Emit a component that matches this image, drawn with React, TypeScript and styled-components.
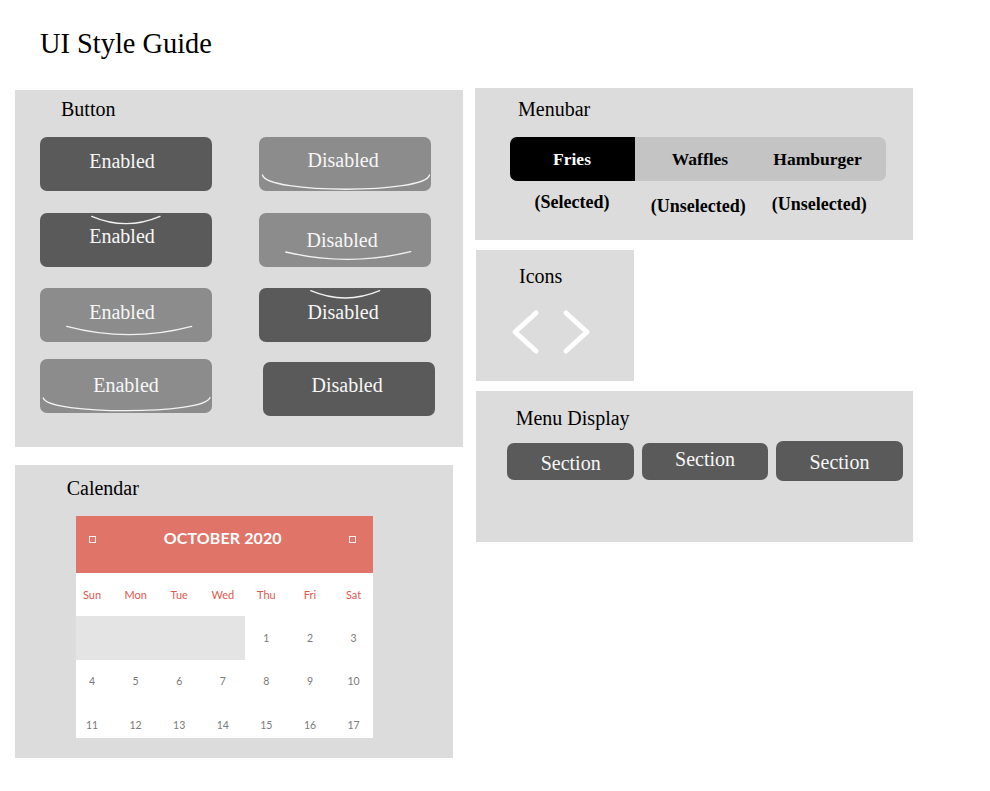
import React from "react";
import styled, { createGlobalStyle } from "styled-components";

const Global = createGlobalStyle`
  html, body { margin: 0; padding: 0; background: #ffffff; }
  body { font-family: "Liberation Serif", "Times New Roman", serif; color: #000; }
`;

const Page = styled.div`
  width: 990px;
  min-height: 791px;
`;

const Title = styled.h1`
  margin: 0;
  padding: 27.5px 0 0 40px;
  font-size: 28.4px;
  line-height: 32px;
  font-weight: 400;
`;

const Columns = styled.div`
  display: flex;
  align-items: flex-start;
  margin-top: 30.5px;
  padding-left: 15px;
`;

const LeftCol = styled.div`
  display: flex;
  flex-direction: column;
  align-items: flex-start;
  gap: 18px;
`;

const RightCol = styled.div`
  display: flex;
  flex-direction: column;
  align-items: flex-start;
  gap: 10px;
  margin-left: 12px;
  margin-top: -2px;
`;

const Panel = styled.section<{ $w: number; $h: number; $pt: number; $dx?: number }>`
  box-sizing: border-box;
  width: ${(p) => p.$w}px;
  height: ${(p) => p.$h}px;
  padding-top: ${(p) => p.$pt}px;
  margin-left: ${(p) => p.$dx ?? 0}px;
  background: #dcdcdc;
  display: flex;
  flex-direction: column;
  align-items: flex-start;
`;

const Label = styled.h2<{ $x: number }>`
  margin: 0;
  padding-left: ${(p) => p.$x}px;
  font-size: 20px;
  line-height: 23px;
  font-weight: 400;
`;

/* ---------- Buttons ---------- */

const ButtonGrid = styled.div`
  display: grid;
  grid-template-columns: 172px 172px;
  column-gap: 46.5px;
  row-gap: 21.7px;
  margin: 16.5px 0 0 25px;
`;

const Btn = styled.div<{ $tone: "dark" | "light"; $mx?: number; $my?: number }>`
  position: relative;
  box-sizing: border-box;
  width: 172px;
  height: 54px;
  margin-left: ${(p) => p.$mx ?? 0}px;
  margin-top: ${(p) => p.$my ?? 0}px;
  border-radius: 7px;
  background: ${(p) => (p.$tone === "dark" ? "#5a5a5a" : "#8c8c8c")};
  color: #f7f7f7;
  display: flex;
  align-items: center;
  justify-content: center;
  font-size: 20px;
  line-height: 23px;
`;

const BtnText = styled.span<{ $dx: number; $lift: number }>`
  margin-left: ${(p) => Math.max(0, p.$dx * 2)}px;
  margin-right: ${(p) => Math.max(0, -p.$dx * 2)}px;
  margin-bottom: ${(p) => Math.max(0, p.$lift * 2)}px;
  margin-top: ${(p) => Math.max(0, -p.$lift * 2)}px;
`;

const Arc = styled.svg`
  position: absolute;
  left: 0;
  top: 0;
  width: 172px;
  height: 54px;
  overflow: visible;
  pointer-events: none;
`;

type BtnSpec = {
  text: string;
  tone: "dark" | "light";
  arc?: string;
  dx: number;
  lift: number;
  mx?: number;
  my?: number;
};

const buttons: BtnSpec[] = [
  { text: "Enabled", tone: "dark", dx: -4, lift: 2.3 },
  { text: "Disabled", tone: "light", dx: -1.4, lift: 3.4, arc: "M3.5 38 C 8 57, 166 57, 170.5 38" },
  { text: "Enabled", tone: "dark", dx: -4, lift: 2.7, arc: "M51.7 3.3 Q86 17.9 120 3.3" },
  { text: "Disabled", tone: "light", dx: -2.4, lift: -0.9, arc: "M26.7 39 Q89 53.8 151.7 38.7" },
  { text: "Enabled", tone: "light", dx: -4, lift: 2.9, arc: "M26.7 38.4 Q89 55 151.7 38.4" },
  { text: "Disabled", tone: "dark", dx: -1.4, lift: 3.2, arc: "M51.7 2.7 Q86 17.3 120.7 2.7" },
  { text: "Enabled", tone: "light", dx: 0, lift: 0.9, my: -4.8, arc: "M3.3 39 C 8 56, 165 56, 170 38.5" },
  { text: "Disabled", tone: "dark", dx: -1.4, lift: 3.1, my: -2.3, mx: 4 },
];

/* ---------- Menubar ---------- */

const Bar = styled.div`
  display: grid;
  grid-template-columns: 125px 131px 104px;
  box-sizing: border-box;
  width: 376px;
  height: 44px;
  padding-right: 16px;
  margin: 16px 0 0 34.5px;
  border-radius: 7px;
  overflow: hidden;
  background: #c4c4c4;
`;

const BarItem = styled.div<{ $selected?: boolean }>`
  display: flex;
  align-items: center;
  justify-content: center;
  background: ${(p) => (p.$selected ? "#000" : "transparent")};
  color: ${(p) => (p.$selected ? "#fff" : "#000")};
  font-weight: 700;
  font-size: 17.5px;
`;

const SubRow = styled.div`
  display: grid;
  grid-template-columns: 125px 131px 104px;
  align-items: start;
  margin: 10.6px 0 0 34.5px;
`;

const SubLabel = styled.div<{ $dx: number; $dy: number }>`
  text-align: center;
  white-space: nowrap;
  font-weight: 700;
  font-size: 18px;
  line-height: 20.7px;
  margin-top: ${(p) => p.$dy}px;
  padding-left: ${(p) => Math.max(0, p.$dx * 2)}px;
  padding-right: ${(p) => Math.max(0, -p.$dx * 2)}px;
`;

/* ---------- Icons ---------- */

const IconRow = styled.div`
  display: flex;
  gap: 19.5px;
  margin: 20.5px 0 0 35px;
`;

const Chevron = styled.svg`
  display: block;
  width: 30px;
  height: 46px;
`;

/* ---------- Menu display ---------- */

const SectionRow = styled.div`
  display: flex;
  align-items: center;
  gap: 7.7px;
  margin: 11.9px 0 0 31.3px;
`;

const SectionBtn = styled.div<{ $h: number; $lift: number }>`
  box-sizing: border-box;
  width: 126.7px;
  height: ${(p) => p.$h}px;
  border-radius: 7px;
  background: #5a5a5a;
  color: #f7f7f7;
  display: flex;
  align-items: center;
  justify-content: center;
  font-size: 20px;
  line-height: 23px;
  padding-bottom: ${(p) => Math.max(0, p.$lift * 2)}px;
  padding-top: ${(p) => Math.max(0, -p.$lift * 2)}px;
`;

/* ---------- Calendar ---------- */

const Cal = styled.div`
  width: 296.5px;
  height: 222px;
  margin: 16.25px 0 0 61px;
  background: #ffffff;
  overflow: hidden;
  font-family: Lato, "Open Sans", sans-serif;
`;

const CalHeader = styled.div`
  box-sizing: border-box;
  height: 57px;
  background: #e07469;
  display: flex;
  align-items: center;
  padding: 0 16.3px 11px 13.3px;
  color: #fff;
`;

const NavBox = styled.span`
  box-sizing: border-box;
  width: 7px;
  height: 7px;
  border: 1px solid rgba(255, 255, 255, 0.9);
  flex: none;
`;

const CalTitle = styled.div`
  flex: 1;
  text-align: center;
  font-weight: 700;
  font-size: 16px;
  letter-spacing: 0.1px;
  margin-bottom: 3px;
`;

const CalGrid = styled.div`
  display: grid;
  grid-template-columns: repeat(7, 43.6px);
  grid-template-rows: 43px;
  grid-auto-rows: 43.5px;
  margin-left: -5.8px;
  width: 305.2px;
`;

const DayName = styled.div`
  display: flex;
  align-items: center;
  justify-content: center;
  font-size: 11px;
  color: #e0584f;
`;

const DateCell = styled.div`
  display: flex;
  align-items: center;
  justify-content: center;
  font-size: 10.5px;
  color: #7a7a7a;
`;

const Blank = styled.div<{ $span: number }>`
  grid-column: span ${(p) => p.$span};
  background: #e4e4e4;
`;

const days = ["Sun", "Mon", "Tue", "Wed", "Thu", "Fri", "Sat"];

export default function App() {
  return (
    <Page>
      <Global />
      <Title>UI Style Guide</Title>
      <Columns>
        <LeftCol>
          <Panel $w={448} $h={357} $pt={7.5}>
            <Label $x={46}>Button</Label>
            <ButtonGrid>
              {buttons.map((b, i) => (
                <Btn key={i} $tone={b.tone} $mx={b.mx} $my={b.my}>
                  <BtnText $dx={b.dx} $lift={b.lift}>{b.text}</BtnText>
                  {b.arc && (
                    <Arc viewBox="0 0 172 54">
                      <path d={b.arc} fill="none" stroke="#f2f2f2" strokeWidth="1.3" strokeLinecap="round" />
                    </Arc>
                  )}
                </Btn>
              ))}
            </ButtonGrid>
          </Panel>

          <Panel $w={438} $h={293.3} $pt={11.75}>
            <Label $x={51.7}>Calendar</Label>
            <Cal>
              <CalHeader>
                <NavBox />
                <CalTitle>OCTOBER 2020</CalTitle>
                <NavBox />
              </CalHeader>
              <CalGrid>
                {days.map((d) => (
                  <DayName key={d}>{d}</DayName>
                ))}
                <Blank $span={4} />
                {Array.from({ length: 17 }, (_, i) => (
                  <DateCell key={i}>{i + 1}</DateCell>
                ))}
              </CalGrid>
            </Cal>
          </Panel>
        </LeftCol>

        <RightCol>
          <Panel $w={438} $h={152} $pt={10.4}>
            <Label $x={43}>Menubar</Label>
            <Bar>
              <BarItem $selected>Fries</BarItem>
              <BarItem>Waffles</BarItem>
              <BarItem>Hamburger</BarItem>
            </Bar>
            <SubRow>
              <SubLabel $dx={0} $dy={0}>(Selected)</SubLabel>
              <SubLabel $dx={-1.7} $dy={4.4}>(Unselected)</SubLabel>
              <SubLabel $dx={1.7} $dy={1.7}>(Unselected)</SubLabel>
            </SubRow>
          </Panel>

          <Panel $w={158} $h={131} $pt={15} $dx={1}>
            <Label $x={43}>Icons</Label>
            <IconRow>
              <Chevron viewBox="0 0 30 46">
                <polyline points="25,4 4,23 25,42" fill="none" stroke="#ffffff" strokeWidth="5" strokeLinecap="round" strokeLinejoin="round" />
              </Chevron>
              <Chevron viewBox="0 0 30 46">
                <polyline points="5,4 26,23 5,42" fill="none" stroke="#ffffff" strokeWidth="5" strokeLinecap="round" strokeLinejoin="round" />
              </Chevron>
            </IconRow>
          </Panel>

          <Panel $w={437} $h={151.3} $pt={15.5} $dx={1}>
            <Label $x={39.7}>Menu Display</Label>
            <SectionRow>
              <SectionBtn $h={36.7} $lift={-1.7}>Section</SectionBtn>
              <SectionBtn $h={36.7} $lift={2}>Section</SectionBtn>
              <SectionBtn $h={40} $lift={-0.7}>Section</SectionBtn>
            </SectionRow>
          </Panel>
        </RightCol>
      </Columns>
    </Page>
  );
}
